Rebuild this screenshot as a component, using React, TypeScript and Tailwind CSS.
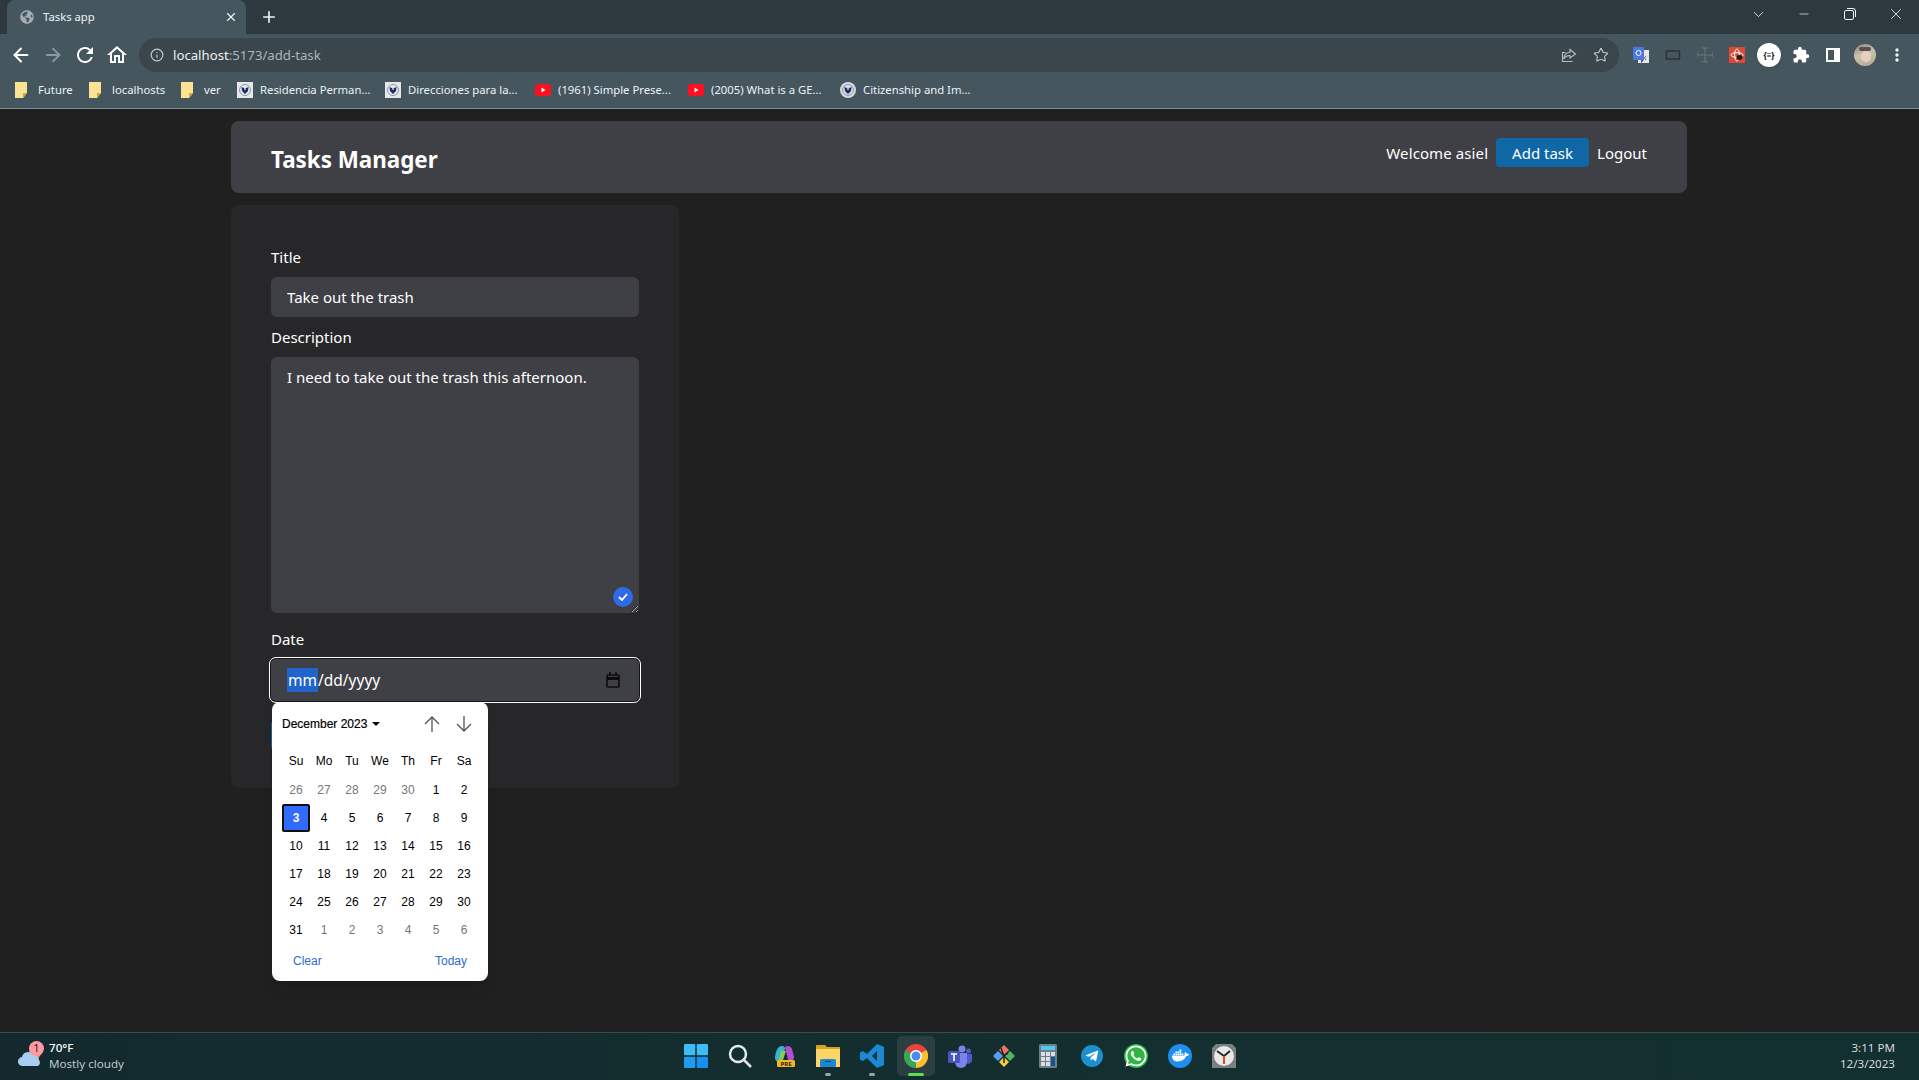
import { ArrowLeft, ArrowRight, ChevronDown, Info, Minus, Plus, Star, X } from 'lucide-react';
import { FaDocker, FaGlobeAmericas, FaTelegramPlane, FaWhatsapp } from 'react-icons/fa';
import { MdExtension, MdMoreVert, MdOutlineHome, MdRefresh } from 'react-icons/md';

function Folder() {
  return (
    <svg width="12" height="16" viewBox="0 0 12 16" className="shrink-0">
      <path d="M0 0h12v11l-4 5H0z" fill="#fde293" />
      <path d="M8 16v-5h4z" fill="#c9a94e" />
    </svg>
  );
}

function Seal({ square = false }: { square?: boolean }) {
  return (
    <svg width="16" height="16" viewBox="0 0 16 16" className="shrink-0">
      {square ? <rect width="16" height="16" fill="#e4e7ec" /> : <circle cx="8" cy="8" r="8" fill="#d5dae1" />}
      <circle cx="8" cy="8" r="5.500" fill="none" stroke="#8f99ad" strokeWidth="1" />
      <path d="M4.500 5L8 6.500 11.500 5 11 9l-3 3-3-3z" fill="#1f2f63" />
      <circle cx="8" cy="7" r="1" fill="#c3cbdd" />
    </svg>
  );
}

function YouTube() {
  return (
    <svg width="16" height="12" viewBox="0 0 16 12" className="shrink-0">
      <rect width="16" height="12" rx="3" fill="#ff0f1f" />
      <path d="M6.500 3.500v5l4-2.500z" fill="#fff" />
    </svg>
  );
}

const bookmarks = [
  { label: 'Future', icon: <Folder />, width: 'w-[74px]' },
  { label: 'localhosts', icon: <Folder />, width: 'w-[92px]' },
  { label: 'ver', icon: <Folder />, width: 'w-[56px]' },
  { label: 'Residencia Perman...', icon: <Seal square />, width: 'w-[148px]' },
  { label: 'Direcciones para la...', icon: <Seal square />, width: 'w-[150px]' },
  { label: '(1961) Simple Prese...', icon: <YouTube />, width: 'w-[153px]' },
  { label: '(2005) What is a GE...', icon: <YouTube />, width: 'w-[152px]' },
  { label: 'Citizenship and Im...', icon: <Seal />, width: 'w-[140px]' },
];

function ChromeBar() {
  return (
    <div className="shrink-0 border-b border-[#7c8c93] text-[#eef2f4]">
      <div className="flex h-[34px] items-start bg-[#2e393f] pl-[7px]">
        <div className="flex h-[34px] w-[239px] items-center rounded-t-lg bg-[#45565f] pl-[13px] pr-[8px]">
          <FaGlobeAmericas size={14} className="text-[#a3adb3]" />
          <span className="ml-[9px] flex-1 text-[11.3px]">Tasks app</span>
          <X size={14} strokeWidth={2} />
        </div>
        <div className="flex h-[34px] w-[46px] items-center justify-center">
          <Plus size={18} strokeWidth={2.2} />
        </div>
        <div className="flex-1" />
        <div className="flex h-[28px] w-[46px] items-center justify-center"><ChevronDown size={17} strokeWidth={1.2} /></div>
        <div className="flex h-[28px] w-[46px] items-center justify-center"><Minus size={14} strokeWidth={1.2} /></div>
        <div className="flex h-[28px] w-[46px] items-center justify-center">
          <svg width="12" height="12" viewBox="0 0 12 12" fill="none" stroke="currentColor">
            <rect x="0.5" y="2.500" width="9" height="9" rx="1.500" />
            <path d="M3 .5h6a2.500 2.500 0 0 1 2.500 2.500v6" />
          </svg>
        </div>
        <div className="flex h-[28px] w-[46px] items-center justify-center"><X size={18} strokeWidth={1.1} /></div>
      </div>
      <div className="flex h-[38px] items-end bg-[#45565f]">
        <div className="flex h-[34px] w-[139px] items-center pl-[10px] text-white">
          <ArrowLeft size={22} strokeWidth={2.2} />
          <ArrowRight size={22} strokeWidth={2} className="ml-[10px] text-[#8b989f]" />
          <MdRefresh size={24} className="ml-[9px]" />
          <MdOutlineHome size={24} className="ml-[8px]" />
        </div>
        <div className="flex h-[34px] w-[1480px] items-center rounded-full bg-[#3a464c] pl-[11px] pr-[10px] text-[13.2px]">
          <Info size={14} className="text-[#c3cbcf]" />
          <span className="ml-[9px] flex-1">
            localhost<span className="text-[#aab4b9]">:5173/add-task</span>
          </span>
          <svg width="16" height="16" viewBox="0 0 16 16" fill="none" stroke="#b4bdc2" strokeWidth="1.1">
            <path d="M9 2.500l5.500 4.500L9 11V8.600C6 8.400 4.200 9.400 2.800 12 3 8 5 5.600 9 5.300zM11.500 14.500h-10v-9h3" />
          </svg>
          <Star size={16} strokeWidth={1.6} className="ml-4 text-[#c3cbcf]" />
        </div>
        <div className="flex h-[34px] flex-1 items-center pl-[6px]">
          <div className="flex w-8 justify-center">
            <svg width="16" height="16" viewBox="0 0 16 16">
              <rect x="5" y="3" width="11" height="13" fill="#e3e5e6" />
              <rect width="11" height="13" rx="1" fill="#4a78e4" />
              <path d="M11 13l-3 3v-3z" fill="#2f52a8" />
              <path d="M10 9l3 4M13 9l-3 4" stroke="#777" />
              <circle cx="5.500" cy="6" r="2.500" fill="none" stroke="#fff" />
            </svg>
          </div>
          <div className="flex w-8 justify-center">
            <svg width="16" height="16" viewBox="0 0 16 16" fill="none">
              <rect x="1.500" y="4" width="13" height="8" stroke="#2c3338" strokeWidth="1.500" />
              <path d="M0 2V0h2M14 0h2v2M0 14v2h2M14 16h2v-2" stroke="#2a7d3a" />
            </svg>
          </div>
          <div className="flex w-8 justify-center">
            <svg width="16" height="16" viewBox="0 0 16 16" stroke="#6c797f" fill="none">
              <path d="M8 1v14M0 8h16M5 1h6M5 15h6M0 5v6M16 5v6" />
            </svg>
          </div>
          <div className="flex w-8 justify-center">
            <svg width="16" height="16" viewBox="0 0 16 16">
              <rect width="16" height="16" fill="#dc4a36" />
              <ellipse cx="8" cy="8" rx="6" ry="2.400" fill="none" stroke="#fff" />
              <ellipse cx="8" cy="8" rx="2.400" ry="6" fill="none" stroke="#fff" />
              <ellipse cx="10.500" cy="10.500" rx="3" ry="2.400" fill="#241c18" />
            </svg>
          </div>
          <div className="flex w-8 justify-center">
            <div className="flex h-6 w-6 items-center justify-center rounded-full bg-white text-[8px] font-bold text-black shadow">
              {'{≡}'}
            </div>
          </div>
          <div className="flex w-8 justify-center"><MdExtension size={18} className="text-white" /></div>
          <div className="flex w-8 justify-center">
            <svg width="14" height="14" viewBox="0 0 14 14">
              <path d="M0 0h14v14H0zM2 2v10h6V2z" fill="#fff" fillRule="evenodd" />
            </svg>
          </div>
          <div className="flex w-8 justify-center">
            <div className="h-[22px] w-[22px] overflow-hidden rounded-full bg-[linear-gradient(160deg,#8a8478_0%,#c9c3ae_45%,#b7a794_100%)]">
              <div className="ml-[5px] mt-[3px] h-[4px] w-[12px] rounded-full bg-[#5c5048]" />
              <div className="ml-[7px] h-[11px] w-[10px] rounded-full bg-[#e6cfc0]" />
            </div>
          </div>
          <div className="flex w-8 justify-center"><MdMoreVert size={20} /></div>
        </div>
      </div>
      <div className="flex h-[36px] items-center bg-[#45565f] pl-[15px] text-[11.3px]">
        {bookmarks.map((b) => (
          <div key={b.label} className={`flex items-center gap-[7px] ${b.width}`}>
            <span className="flex w-4 justify-start">{b.icon}</span>
            <span className="whitespace-nowrap">{b.label}</span>
          </div>
        ))}
      </div>
    </div>
  );
}

const days = [
  [26, 27, 28, 29, 30, 1, 2],
  [3, 4, 5, 6, 7, 8, 9],
  [10, 11, 12, 13, 14, 15, 16],
  [17, 18, 19, 20, 21, 22, 23],
  [24, 25, 26, 27, 28, 29, 30],
  [31, 1, 2, 3, 4, 5, 6],
];

function DatePopup() {
  return (
    <div className="absolute left-[1px] top-[45px] z-10 h-[279px] w-[216px] rounded-lg bg-white font-['Liberation_Sans',sans-serif] text-xs text-black shadow-lg">
      <div className="flex h-[44px] items-center pl-[10px] pr-[16px]">
        <span className="font-medium [-webkit-text-stroke:0.2px_black]">December 2023</span>
        <svg width="8" height="4" viewBox="0 0 8 4" className="ml-[5px]"><path d="M0 0h8L4 4z" /></svg>
        <div className="flex-1" />
        <svg width="16" height="16" viewBox="0 0 16 16" fill="none" stroke="#555" strokeWidth="1.300">
          <path d="M8 16V1M1 8l7-7 7 7" />
        </svg>
        <svg width="16" height="16" viewBox="0 0 16 16" fill="none" stroke="#555" strokeWidth="1.300" className="ml-4">
          <path d="M8 0v15M1 8l7 7 7-7" />
        </svg>
      </div>
      <div className="grid grid-cols-[repeat(7,28px)] pl-[10px]">
        {['Su', 'Mo', 'Tu', 'We', 'Th', 'Fr', 'Sa'].map((d) => (
          <div key={d} className="flex h-[30px] items-start justify-center pt-[7px]">{d}</div>
        ))}
        {days.map((week, row) =>
          week.map((d, col) => {
            const muted = (row === 0 && d > 20) || (row === 5 && d < 20);
            const selected = row === 1 && col === 0;
            return (
              <div
                key={`${row}-${col}`}
                className={
                  selected
                    ? 'flex h-7 items-center justify-center rounded-[2px] border-2 border-[#101010] bg-[#2f6bff] font-bold text-white'
                    : muted
                      ? 'flex h-7 items-center justify-center text-[#767676]'
                      : 'flex h-7 items-center justify-center'
                }
              >
                {d}
              </div>
            );
          }),
        )}
      </div>
      <div className="flex justify-between pl-[21px] pr-[21px] pt-[9px] text-[#2f6ad0]">
        <span>Clear</span>
        <span>Today</span>
      </div>
    </div>
  );
}

function TaskForm() {
  return (
    <div className="mt-3 h-[583px] w-[448px] rounded-lg bg-[#27272a] p-10">
      <label className="mb-2 block">Title</label>
      <input
        readOnly
        defaultValue="Take out the trash"
        className="mb-2 block h-10 w-full rounded-md bg-[#3f3f46] px-4 outline-none"
      />
      <label className="mb-2 block">Description</label>
      <div className="relative mb-[14px] h-[256px]">
        <textarea
          readOnly
          defaultValue="I need to take out the trash this afternoon."
          className="block h-full w-full rounded-md bg-[#3f3f46] px-4 py-2 outline-none [color-scheme:dark]"
        />
        <div className="absolute bottom-[6px] right-[6px] flex h-5 w-5 items-center justify-center rounded-full bg-[#2f6be8]">
          <svg width="10" height="8" viewBox="0 0 10 8" fill="none" stroke="#fff" strokeWidth="1.800">
            <path d="M1 4l3 3 5-6" />
          </svg>
        </div>
      </div>
      <label className="mb-2 block">Date</label>
      <div className="relative">
        <div className="-mx-[2px] -my-[2px] h-[46px] rounded-[7px] border border-white bg-[#3f3f46] shadow-[inset_0_0_0_1px_#141414]">
          <div className="flex h-full items-center pl-[17px] pr-[20px] text-[15.500px]">
            <span className="bg-[#2164cc] px-[1px]">mm</span>
            <span className="flex-1">/dd/yyyy</span>
            <svg width="14" height="16" viewBox="0 0 14 16" fill="none" stroke="#0c0c0c" strokeWidth="1.600">
              <rect x="1" y="3" width="12" height="12" rx="1" />
              <path d="M1 6.500h12" strokeWidth="3" />
              <path d="M4 0v3M10 0v3" />
            </svg>
          </div>
        </div>
        <DatePopup />
      </div>
      <div className="mt-[20px] h-[29px] w-[70px] rounded-sm bg-[#0f67a5]" />
    </div>
  );
}

function TaskbarIcon({ children }: { children: React.ReactNode }) {
  return <div className="relative flex h-10 w-[44px] items-center justify-center">{children}</div>;
}

function Taskbar() {
  return (
    <div className="flex h-12 shrink-0 items-center border-t border-[#3a4b4d] bg-[linear-gradient(90deg,#13292e,#142f2f_60%,#12302f)] pb-[2px] text-[11.6px]">
      <div className="flex w-[674px] items-center pl-[18px]">
        <div className="relative h-6 w-[31px]">
          <svg width="25" height="24" viewBox="0 0 25 24">
            <circle cx="17" cy="9" r="6" fill="#f38a1f" />
            <path d="M5 22a4.500 4.500 0 0 1-1-9 6 6 0 0 1 11-2 5 5 0 0 1 6 5 4 4 0 0 1-1 6z" fill="#a9cdf0" />
          </svg>
          <div className="absolute -top-[3px] left-[11px] flex h-[15px] w-[15px] items-center justify-center rounded-full bg-[#ff9aa2] text-[11px] text-[#3a1518]">
            1
          </div>
        </div>
        <div className="leading-4">
          <div className="font-medium text-white">70°F</div>
          <div className="text-[#bfc8c9]">Mostly cloudy</div>
        </div>
      </div>
      <div className="flex items-center">
        <TaskbarIcon>
          <svg width="24" height="24" viewBox="0 0 24 24" fill="#3dbcf6">
            <rect width="11.300" height="11.300" rx="1" />
            <rect x="12.700" width="11.300" height="11.300" rx="1" />
            <rect y="12.700" width="11.300" height="11.300" rx="1" fill="#1d9cf0" />
            <rect x="12.700" y="12.700" width="11.300" height="11.300" rx="1" fill="#1490f0" />
          </svg>
        </TaskbarIcon>
        <TaskbarIcon>
          <svg width="24" height="24" viewBox="0 0 24 24" fill="none" stroke="#e4e8e8" strokeWidth="2.500">
            <circle cx="10" cy="10" r="8" />
            <path d="M16 16l7 7" />
          </svg>
        </TaskbarIcon>
        <TaskbarIcon>
          <svg width="24" height="24" viewBox="0 0 24 24">
            <path d="M3 13C4 6 6 2 10 2c2 0 3 1 3 3L9 17c-2 2-6 1-6-4z" fill="#35b6c8" />
            <path d="M13 3c2-2 6-1 7 2l2 8c0 3-3 5-6 3z" fill="#b24fd0" />
            <path d="M9 7h5l-3 9H7z" fill="#8fc75a" />
            <rect x="5" y="16" width="18" height="7" rx="1.500" fill="#f5b918" />
            <text x="14" y="22" fontSize="6" fontWeight="700" textAnchor="middle" fill="#222">PRE</text>
          </svg>
        </TaskbarIcon>
        <TaskbarIcon>
          <svg width="24" height="22" viewBox="0 0 24 22">
            <path d="M0 1a1 1 0 0 1 1-1h8l2 2h13v20H0z" fill="#d9a321" />
            <rect y="4" width="24" height="18" fill="#fbd667" />
            <rect x="4" y="14" width="16" height="8" rx="1.500" fill="#1b86d6" />
            <path d="M9 16.500h6" stroke="#0c3f6b" />
          </svg>
          <div className="absolute bottom-0 h-[3px] w-[6px] rounded-full bg-[#9aa5a6]" />
        </TaskbarIcon>
        <TaskbarIcon>
          <svg width="24" height="24" viewBox="0 0 24 24">
            <path d="M17 0l7 3v18l-7 3L7 14l-4 3-3-1.500v-7L3 7l4 3zM17 7l-5 5 5 5z" fill="#1a8ad4" fillRule="evenodd" />
          </svg>
          <div className="absolute bottom-0 h-[3px] w-[6px] rounded-full bg-[#9aa5a6]" />
        </TaskbarIcon>
        <TaskbarIcon>
          <div className="absolute inset-x-[3px] inset-y-0 rounded-[5px] bg-[#2b3f42]" />
          <svg width="24" height="24" viewBox="0 0 24 24" className="relative">
            <circle cx="12" cy="12" r="12" fill="#e8453c" />
            <path d="M12 12L1.600 6A12 12 0 0 0 12 24z" fill="#34a853" />
            <path d="M12 12l10.400-6A12 12 0 0 1 12 24z" fill="#fbc02d" />
            <circle cx="12" cy="12" r="6" fill="#fff" />
            <circle cx="12" cy="12" r="4.500" fill="#4a8af4" />
          </svg>
          <div className="absolute bottom-0 h-[3px] w-4 rounded-full bg-[#5ae04a]" />
        </TaskbarIcon>
        <TaskbarIcon>
          <svg width="24" height="24" viewBox="0 0 24 24">
            <circle cx="14" cy="5" r="3.500" fill="#7b83eb" />
            <circle cx="20.500" cy="7" r="2.500" fill="#5059c9" />
            <path d="M16 10h8v7a4 4 0 0 1-6 2z" fill="#5059c9" />
            <path d="M7 9h12v9a6 6 0 0 1-12 0z" fill="#7b83eb" />
            <rect y="7" width="12" height="12" rx="1.500" fill="#4b53bc" />
            <path d="M3 10h6M6 10v7" stroke="#fff" strokeWidth="1.600" />
          </svg>
        </TaskbarIcon>
        <TaskbarIcon>
          <svg width="24" height="24" viewBox="0 0 24 24">
            <path d="M12 1l5 5-5 5-5-5z" fill="#f0716b" />
            <path d="M6 7l5 5-5 5-5-5z" fill="#5aa0f2" />
            <path d="M18 7l5 5-5 5-5-5z" fill="#4fb85a" />
            <path d="M12 13l5 5-5 5-5-5z" fill="#f5cf3c" />
            <path d="M9 4l3 8v7M12 12l4-3" stroke="#222" strokeWidth="1.500" fill="none" />
          </svg>
        </TaskbarIcon>
        <TaskbarIcon>
          <svg width="18" height="24" viewBox="0 0 18 24">
            <rect width="18" height="24" rx="1.500" fill="#6d7f8b" />
            <rect x="2" y="2" width="14" height="4" fill="#54c8ec" />
            <path d="M2 8h4v4H2zM7 8h4v4H7zM2 13h4v4H2zM7 13h4v4H7zM2 18h4v4H2zM7 18h4v4H7zM12 8h4v4h-4z" fill="#d8dee2" />
            <rect x="12" y="13" width="4" height="9" fill="#17538e" />
          </svg>
        </TaskbarIcon>
        <TaskbarIcon>
          <div className="flex h-[22px] w-[22px] items-center justify-center rounded-full bg-[#1c8fd0]">
            <FaTelegramPlane size={14} className="text-white" />
          </div>
        </TaskbarIcon>
        <TaskbarIcon>
          <div className="flex h-6 w-6 items-center justify-center rounded-full bg-[#2bb741]">
            <FaWhatsapp size={24} className="text-white" />
          </div>
        </TaskbarIcon>
        <TaskbarIcon>
          <div className="flex h-6 w-6 items-center justify-center rounded-full bg-[#1d8fee]">
            <FaDocker size={17} className="text-white" />
          </div>
        </TaskbarIcon>
        <TaskbarIcon>
          <svg width="24" height="24" viewBox="0 0 24 24">
            <path d="M4 0h16l4 4v20H0V4z" fill="#7a7f80" />
            <circle cx="12" cy="12" r="10" fill="#e8e8e8" />
            <path d="M12 12L5 7M12 12l6-5" stroke="#222" strokeWidth="1.800" />
            <path d="M12 12v8" stroke="#e24a1f" strokeWidth="2" />
          </svg>
        </TaskbarIcon>
      </div>
      <div className="flex-1 pr-6 text-right leading-4 text-[#d2dadb]">
        <div>3:11 PM</div>
        <div>12/3/2023</div>
      </div>
    </div>
  );
}

export default function App() {
  return (
    <div className="flex h-screen flex-col overflow-hidden bg-[#202020] font-['Noto_Sans',sans-serif] text-[15px] leading-6 text-white">
      <ChromeBar />
      <main className="flex-1 overflow-hidden">
        <div className="ml-[191px] w-[1536px] px-10 pt-3">
          <nav className="flex h-[72px] items-start justify-between rounded-lg bg-[#3f3f46] px-10 pt-[17px]">
            <h1 className="mt-[6px] text-[22.4px] font-bold leading-8">Tasks Manager</h1>
            <ul className="flex items-center gap-x-2">
              <li className="tracking-[0.1px]">Welcome asiel</li>
              <li className="flex h-[29px] items-center rounded-sm bg-[#0f67a5] px-4">Add task</li>
              <li>Logout</li>
            </ul>
          </nav>
          <TaskForm />
        </div>
      </main>
      <Taskbar />
    </div>
  );
}
